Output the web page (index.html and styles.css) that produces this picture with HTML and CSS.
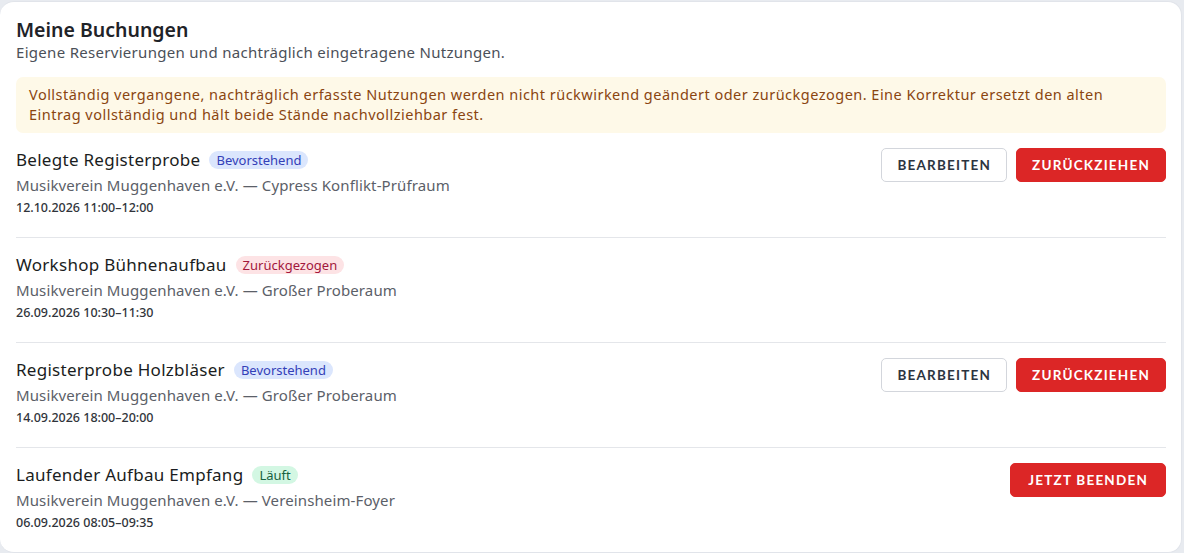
FILE: index.html
```html
<!DOCTYPE html>
<html lang="de">
<head>
<meta charset="UTF-8">
<meta name="viewport" content="width=device-width, initial-scale=1.0">
<title>Meine Buchungen</title>
<link rel="stylesheet" href="styles.css">
</head>
<body>
<section class="card">
    <h1>Meine Buchungen</h1>
    <p class="lead">Eigene Reservierungen und nachträglich eingetragene Nutzungen.</p>

    <div class="notice">Vollständig vergangene, nachträglich erfasste Nutzungen werden nicht rückwirkend geändert oder zurückgezogen. Eine Korrektur ersetzt den alten Eintrag vollständig und hält beide Stände nachvollziehbar fest.</div>

    <ul class="bookings">
        <li class="booking">
            <div class="info">
                <div class="title">Belegte Registerprobe <span class="badge upcoming">Bevorstehend</span></div>
                <div class="place">Musikverein Muggenhaven e.V. — Cypress Konflikt-Prüfraum</div>
                <div class="time">12.10.2026 11:00–12:00</div>
            </div>
            <div class="actions">
                <button class="btn outline">Bearbeiten</button>
                <button class="btn danger">Zurückziehen</button>
            </div>
        </li>
        <li class="booking">
            <div class="info">
                <div class="title">Workshop Bühnenaufbau <span class="badge withdrawn">Zurückgezogen</span></div>
                <div class="place">Musikverein Muggenhaven e.V. — Großer Proberaum</div>
                <div class="time">26.09.2026 10:30–11:30</div>
            </div>
        </li>
        <li class="booking">
            <div class="info">
                <div class="title">Registerprobe Holzbläser <span class="badge upcoming">Bevorstehend</span></div>
                <div class="place">Musikverein Muggenhaven e.V. — Großer Proberaum</div>
                <div class="time">14.09.2026 18:00–20:00</div>
            </div>
            <div class="actions">
                <button class="btn outline">Bearbeiten</button>
                <button class="btn danger">Zurückziehen</button>
            </div>
        </li>
        <li class="booking">
            <div class="info">
                <div class="title">Laufender Aufbau Empfang <span class="badge running">Läuft</span></div>
                <div class="place">Musikverein Muggenhaven e.V. — Vereinsheim-Foyer</div>
                <div class="time">06.09.2026 08:05–09:35</div>
            </div>
            <div class="actions">
                <button class="btn danger">Jetzt beenden</button>
            </div>
        </li>
    </ul>
</section>
</body>
</html>
```

FILE: styles.css
```css
body {
    margin: 0;
    padding: 1px 2px 2px 0;
    background-color: #e8ebf0;
    font-family: "Noto Sans", sans-serif;
    color: #1f2328;
}

.card {
    background: #fff;
    border: 1px solid #e1e4ea;
    border-left: none;
    border-radius: 14px;
    padding: 15px 15px 0 16px;
}

h1 {
    margin: 0;
    font-size: 19.5px;
    line-height: 26px;
    font-weight: 600;
    color: #1f2328;
}

.lead {
    margin: 0 0 16px;
    font-size: 15px;
    line-height: 18px;
    letter-spacing: 0.3px;
    color: #4b5058;
}

.notice {
    background: #fef9e8;
    color: #8a4510;
    border-radius: 7px;
    padding: 7px 12px 9px 13px;
    font-size: 14.5px;
    line-height: 20px;
    letter-spacing: 0.48px;
}

.bookings {
    list-style: none;
    margin: 0;
    padding: 0;
}

.booking {
    display: flex;
    justify-content: space-between;
    align-items: flex-start;
    padding: 15px 0 19px;
    border-bottom: 1px solid #e4e6ea;
}

.booking:last-child {
    border-bottom: none;
}

.title {
    display: flex;
    align-items: center;
    gap: 9px;
    font-size: 17px;
    line-height: 24px;
    letter-spacing: 0.28px;
    color: #1a1d21;
}

.place {
    margin-top: 2px;
    font-size: 15px;
    line-height: 22px;
    letter-spacing: 0.12px;
    color: #5b6068;
}

.time {
    margin-top: 2px;
    font-size: 12.5px;
    line-height: 20px;
    font-weight: 500;
    color: #30343a;
}

.badge {
    font-size: 13px;
    line-height: 18px;
    letter-spacing: 0;
    padding: 0 7px;
    border-radius: 9px;
}

.badge.upcoming {
    background: #dbe6fd;
    color: #3340b8;
}

.badge.withdrawn {
    background: #fde3e5;
    color: #a3173c;
}

.badge.running {
    background: #d3f7e3;
    color: #17623f;
}

.actions {
    display: flex;
    gap: 9px;
}

.btn {
    font-family: "Lato", sans-serif;
    font-size: 13.5px;
    font-weight: 700;
    letter-spacing: 1.2px;
    text-transform: uppercase;
    height: 34px;
    padding: 0 15px;
    border-radius: 5px;
    cursor: pointer;
}

.btn.outline {
    background: #fff;
    color: #2c3440;
    border: 1px solid #d3d6dc;
}

.btn.danger {
    background: #dc2626;
    color: #fff;
    border: 1px solid #dc2626;
}

.actions .btn.danger:only-child {
    padding: 0 17px;
}
```
